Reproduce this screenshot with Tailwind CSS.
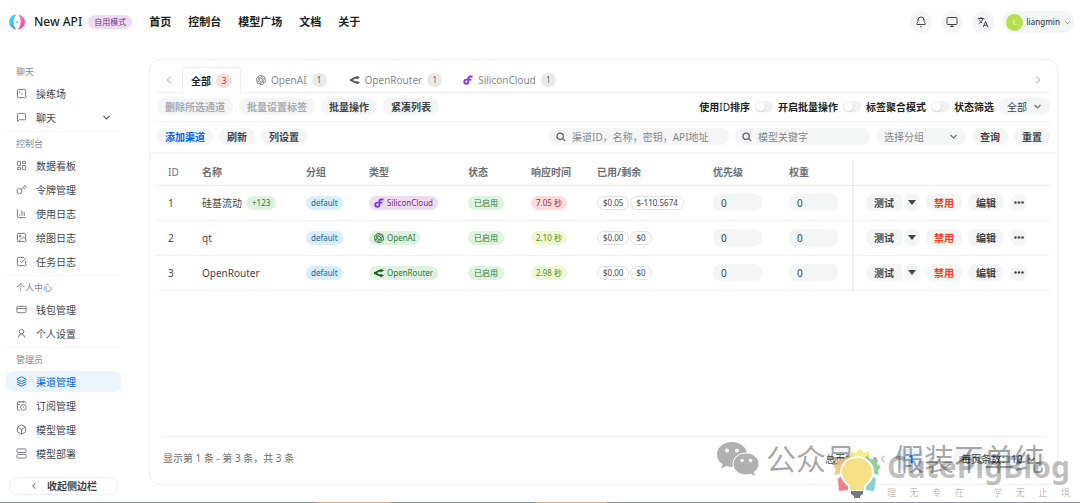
<!DOCTYPE html>
<html lang="zh-CN">
	<head>
		<meta charset="UTF-8" />
		<meta name="viewport" content="width=device-width, initial-scale=1.0" />
		<title>New API</title>
		<script src="https://cdn.jsdelivr.net/npm/@tailwindcss/browser@4"></script>
	</head>
	<body
		class="flex min-h-screen flex-col bg-white font-['Noto_Sans','Noto_Sans_CJK_SC',sans-serif] text-[10px] leading-4 text-[#41464c]"
	>
		<!-- Icon sprite -->
		<svg class="absolute size-0">
			<symbol id="i-terminal" viewBox="0 0 24 24"><rect x="3" y="3" width="18" height="18" rx="2" /><path d="m7 11 2-2-2-2M11 13h4" /></symbol>
			<symbol id="i-message" viewBox="0 0 24 24"><path d="M21 15a2 2 0 0 1-2 2H7l-4 4V5a2 2 0 0 1 2-2h14a2 2 0 0 1 2 2z" /></symbol>
			<symbol id="i-dashboard" viewBox="0 0 24 24"><rect x="3" y="3" width="7" height="9" rx="1" /><rect x="14" y="3" width="7" height="5" rx="1" /><rect x="14" y="12" width="7" height="9" rx="1" /><rect x="3" y="16" width="7" height="5" rx="1" /></symbol>
			<symbol id="i-key" viewBox="0 0 24 24"><circle cx="7.5" cy="15.5" r="5.5" /><path d="m11.4 11.6 9.6-9.6M15.5 7.5l2.3 2.3a1 1 0 0 0 1.4 0l2.1-2.1a1 1 0 0 0 0-1.4L19 4" /></symbol>
			<symbol id="i-chart" viewBox="0 0 24 24"><path d="M3 3v16a2 2 0 0 0 2 2h16M18 17V9M13 17V5M8 17v-3" /></symbol>
			<symbol id="i-image" viewBox="0 0 24 24"><rect x="3" y="3" width="18" height="18" rx="2" /><circle cx="9" cy="9" r="2" /><path d="m21 15-3.1-3.1a2 2 0 0 0-2.8 0L6 21" /></symbol>
			<symbol id="i-check" viewBox="0 0 24 24"><path d="M21 10.5V19a2 2 0 0 1-2 2H5a2 2 0 0 1-2-2V5a2 2 0 0 1 2-2h12.5" /><path d="m9 11 3 3L22 4" /></symbol>
			<symbol id="i-card" viewBox="0 0 24 24"><rect x="2" y="5" width="20" height="14" rx="2" /><path d="M2 10h20" /></symbol>
			<symbol id="i-user" viewBox="0 0 24 24"><circle cx="12" cy="8" r="5" /><path d="M19 21a7 7 0 0 0-14 0" /></symbol>
			<symbol id="i-layers" viewBox="0 0 24 24"><path d="M12.8 2.2a2 2 0 0 0-1.6 0L2.6 6.1a1 1 0 0 0 0 1.8l8.6 3.9a2 2 0 0 0 1.6 0l8.6-3.9a1 1 0 0 0 0-1.8z" /><path d="M2 12a1 1 0 0 0 .6.9l8.6 3.9a2 2 0 0 0 1.6 0l8.6-3.9A1 1 0 0 0 22 12" /><path d="M2 17a1 1 0 0 0 .6.9l8.6 3.9a2 2 0 0 0 1.6 0l8.6-3.9A1 1 0 0 0 22 17" /></symbol>
			<symbol id="i-calendar" viewBox="0 0 24 24"><path d="M16 14v2.2l1.6 1M16 2v4M21 7.5V6a2 2 0 0 0-2-2H5a2 2 0 0 0-2 2v14a2 2 0 0 0 2 2h3.5M3 10h5M8 2v4" /><circle cx="16" cy="16" r="6" /></symbol>
			<symbol id="i-package" viewBox="0 0 24 24"><path d="M21 8a2 2 0 0 0-1-1.7l-7-4a2 2 0 0 0-2 0l-7 4A2 2 0 0 0 3 8v8a2 2 0 0 0 1 1.7l7 4a2 2 0 0 0 2 0l7-4a2 2 0 0 0 1-1.7z" /><path d="m3.3 7 8.7 5 8.7-5M12 22V12" /></symbol>
			<symbol id="i-server" viewBox="0 0 24 24"><rect x="2" y="2" width="20" height="8" rx="2" /><rect x="2" y="14" width="20" height="8" rx="2" /><path d="M6 6h.01M6 18h.01" /></symbol>
			<symbol id="i-down" viewBox="0 0 24 24"><path d="m4 8 8 8 8-8" /></symbol>
			<symbol id="i-left" viewBox="0 0 24 24"><path d="m16 4-8 8 8 8" /></symbol>
			<symbol id="i-right" viewBox="0 0 24 24"><path d="m8 4 8 8-8 8" /></symbol>
			<symbol id="i-search" viewBox="0 0 24 24"><circle cx="10" cy="10" r="7.5" /><path d="m16 16 6 6" /></symbol>
			<symbol id="i-bell" viewBox="0 0 24 24"><path d="M10.3 21a2 2 0 0 0 3.4 0M3.3 15.3A1 1 0 0 0 4 17h16a1 1 0 0 0 .7-1.7C19.4 14 18 12.5 18 8A6 6 0 0 0 6 8c0 4.5-1.4 6-2.7 7.3" /></symbol>
			<symbol id="i-monitor" viewBox="0 0 24 24"><rect x="2" y="3" width="20" height="14" rx="2" /><path d="M8 21h8M12 17v4" /></symbol>
			<symbol id="i-lang" viewBox="0 0 24 24"><path d="M1.5 5h13M8 2v3M3.500 15C8 12.500 11 9 12 5M4.500 7c1 3 3.500 5.500 6.500 7M12.500 22l4.700-11 4.700 11M14 18.500h6.500" /></symbol>
			<symbol id="i-openai" viewBox="0 0 24 24"><path d="M22.2819 9.8211a5.9847 5.9847 0 0 0-.5157-4.9108 6.0462 6.0462 0 0 0-6.5098-2.9A6.0651 6.0651 0 0 0 4.9807 4.1818a5.9847 5.9847 0 0 0-3.9977 2.9 6.0462 6.0462 0 0 0 .7427 7.0966 5.98 5.98 0 0 0 .511 4.9107 6.051 6.051 0 0 0 6.5146 2.9001A5.9847 5.9847 0 0 0 13.2599 24a6.0557 6.0557 0 0 0 5.7718-4.2058 5.9894 5.9894 0 0 0 3.9977-2.9001 6.0557 6.0557 0 0 0-.7475-7.0729zm-9.022 12.6081a4.4755 4.4755 0 0 1-2.8764-1.0408l.1419-.0804 4.7783-2.7582a.7948.7948 0 0 0 .3927-.6813v-6.7369l2.02 1.1686a.071.071 0 0 1 .038.052v5.5826a4.504 4.504 0 0 1-4.4945 4.4944zm-9.6607-4.1254a4.4708 4.4708 0 0 1-.5346-3.0137l.142.0852 4.783 2.7582a.7712.7712 0 0 0 .7806 0l5.8428-3.3685v2.3324a.0804.0804 0 0 1-.0332.0615L9.74 19.9502a4.4992 4.4992 0 0 1-6.1408-1.6464zM2.3408 7.8956a4.485 4.485 0 0 1 2.3655-1.9728V11.6a.7664.7664 0 0 0 .3879.6765l5.8144 3.3543-2.0201 1.1685a.0757.0757 0 0 1-.071 0l-4.8303-2.7865A4.504 4.504 0 0 1 2.3408 7.872zm16.5963 3.8558L13.1038 8.364 15.1192 7.2a.0757.0757 0 0 1 .071 0l4.8303 2.7913a4.4944 4.4944 0 0 1-.6765 8.1042v-5.6772a.79.79 0 0 0-.407-.667zm2.0107-3.0231l-.142-.0852-4.7735-2.7818a.7759.7759 0 0 0-.7854 0L9.409 9.2297V6.8974a.0662.0662 0 0 1 .0284-.0615l4.8303-2.7866a4.4992 4.4992 0 0 1 6.6802 4.66zM8.3065 12.863l-2.02-1.1638a.0804.0804 0 0 1-.038-.0567V6.0742a4.4992 4.4992 0 0 1 7.3757-3.4537l-.142.0805L8.704 5.459a.7948.7948 0 0 0-.3927.6813zm1.0976-2.3654l2.602-1.4998 2.6069 1.4998v2.9994l-2.5974 1.4997-2.6067-1.4997Z" fill="currentColor" stroke="currentColor" stroke-width=".5" /></symbol>
			<symbol id="i-openrouter" viewBox="0 0 24 24"><path d="M0 12c7 0 7-6 17-6M0 12c7 0 7 6 17 6" fill="none" stroke="currentColor" stroke-width="4.500" /><path d="m16 1.500 8 4.500-8 4.500zM16 13.500l8 4.500-8 4.500z" fill="currentColor" /></symbol>
			<symbol id="i-silicon" viewBox="0 0 24 24"><path d="M23 3.500h-6a4 4 0 0 0-4 4V16a5 5 0 1 1-5-5h12" fill="none" stroke="currentColor" stroke-width="4.500" /></symbol>
			<linearGradient id="logo-left" x1="0" y1="0" x2="1" y2="1"><stop offset=".3" stop-color="#35d0f8" /><stop offset="1" stop-color="#8a6cf2" /></linearGradient>
			<linearGradient id="logo-right" x1="0" y1="0" x2="1" y2="1"><stop offset="0" stop-color="#f9a0d4" /><stop offset=".7" stop-color="#f4509f" /></linearGradient>
		</svg>

		<!-- Header -->
		<header class="flex items-center justify-between py-[11px] pr-[6px] pl-[9px]">
			<div class="flex items-center">
				<svg class="size-4" viewBox="0 0 32 32">
					<path d="M15 1A15 15 0 0 0 15 31C7 25 7 7 15 1z" fill="url(#logo-left)" />
					<path d="M17 31A15 15 0 0 0 17 1c8 6 8 24 0 30z" fill="url(#logo-right)" />
					<path d="m16 12 1 3 3 1-3 1-1 3-1-3-3-1 3-1z" fill="#35c8f5" />
				</svg>
				<span class="ml-[9px] text-[12px] font-medium text-[#1c1f23]">New API</span>
				<span class="ml-[6px] rounded-full bg-[#efdcf3] px-[6px] text-[8px] leading-[14px] text-[#7a2d8a]">自用模式</span>
				<nav class="ml-[17px] flex gap-[17px] text-[11px] font-bold text-[#1c1f23]">
					<a href="#">首页</a>
					<a href="#">控制台</a>
					<a href="#">模型广场</a>
					<a href="#">文档</a>
					<a href="#">关于</a>
				</nav>
			</div>
			<div class="flex items-center gap-[9px]">
				<button aria-label="通知" class="flex size-[22px] items-center justify-center rounded-full bg-[#f4f5f5]">
					<svg class="size-3 fill-none stroke-current stroke-2"><use href="#i-bell" /></svg>
				</button>
				<button aria-label="主题" class="flex size-[22px] items-center justify-center rounded-full bg-[#f4f5f5]">
					<svg class="size-3 fill-none stroke-current stroke-2"><use href="#i-monitor" /></svg>
				</button>
				<button aria-label="语言" class="flex size-[22px] items-center justify-center rounded-full bg-[#f4f5f5]">
					<svg class="size-3 fill-none stroke-current stroke-2"><use href="#i-lang" /></svg>
				</button>
				<button class="flex h-[22px] items-center rounded-full bg-[#f4f5f5] pr-[3px] pl-[3px]">
					<span class="size-[17px] rounded-full bg-[#b3e04f] text-center text-[7px] leading-[17px] text-white">L</span>
					<span class="mr-1 ml-[3px] text-[8px] font-medium">liangmin</span>
					<svg class="size-[7px] fill-none stroke-current stroke-2"><use href="#i-down" /></svg>
				</button>
			</div>
		</header>

		<div class="flex flex-1 pt-[15px]">
			<!-- Sidebar -->
			<aside class="w-[149px] shrink-0 pr-7 pl-[6px]">
				<nav id="sidebar"></nav>
				<button
					class="mt-[13px] ml-[3px] flex h-[18px] w-[109px] items-center justify-center gap-[9px] rounded-[8px] border border-[#f0f0f1] font-semibold"
				>
					<svg class="size-2 fill-none stroke-current stroke-3"><use href="#i-left" /></svg>
					收起侧边栏
				</button>
			</aside>

			<!-- Channel card -->
			<main class="mr-[22px] mb-[17px] flex min-w-0 flex-1 flex-col rounded-[11px] border border-[#f0f1f1]">
				<div class="mx-[7px] mt-[7px] flex h-[26px] items-center border-b border-[#eeefef] text-[#85888c]">
					<button aria-label="向左" class="flex w-[25px] justify-center pr-[2px]">
						<svg class="size-[10px] fill-none stroke-current stroke-2"><use href="#i-left" /></svg>
					</button>
					<button class="-mb-px flex h-[26px] items-center gap-[5px] border border-b-0 border-[#eeefef] bg-white px-2 font-bold text-[#1c1f23]">
						全部<span class="w-4 rounded-full bg-[#fddcdb] text-center text-[8px] leading-[14px] font-normal text-[#a0352f]">3</span>
					</button>
					<button class="ml-[15px] flex items-center gap-[5px]">
						<svg class="size-[10px]"><use href="#i-openai" /></svg>
						OpenAI<span class="w-[15px] rounded-full bg-[#e8eaea] text-center text-[8px] leading-[14px] text-[#5b5f64]">1</span>
					</button>
					<button class="ml-[23px] flex items-center gap-[5px]">
						<svg class="size-[10px] text-[#53575c]"><use href="#i-openrouter" /></svg>
						OpenRouter<span class="w-[15px] rounded-full bg-[#e8eaea] text-center text-[8px] leading-[14px] text-[#5b5f64]">1</span>
					</button>
					<button class="ml-[21px] flex items-center gap-[5px]">
						<svg class="size-[10px] text-[#7c3aed]"><use href="#i-silicon" /></svg>
						SiliconCloud<span class="w-[15px] rounded-full bg-[#e8eaea] text-center text-[8px] leading-[14px] text-[#5b5f64]">1</span>
					</button>
					<button aria-label="向右" class="mr-[7px] ml-auto">
						<svg class="size-[10px] fill-none stroke-current stroke-2"><use href="#i-right" /></svg>
					</button>
				</div>

				<div class="mx-[7px] flex items-center justify-between border-b border-[#f0f1f1] pt-[5px] pb-[6px]">
					<div class="flex gap-[6px] font-bold">
						<button class="h-[17px] rounded-[8px] bg-[#f4f5f5] px-2 text-[#a7abb0]">删除所选通道</button>
						<button class="h-[17px] rounded-[8px] bg-[#f4f5f5] px-2 text-[#a7abb0]">批量设置标签</button>
						<button class="h-[17px] rounded-[8px] bg-[#f4f5f5] px-2">批量操作</button>
						<button class="h-[17px] rounded-[8px] bg-[#f4f5f5] px-2">紧凑列表</button>
					</div>
					<div class="flex items-center gap-[5px] font-bold text-[#1c1f23]">
						<label for="sort-id">使用<span class="font-normal">ID</span>排序</label>
						<input id="sort-id" type="checkbox" class="flex h-[11px] w-[18px] appearance-none items-center rounded-full bg-[#f0f2f2] pl-px before:size-[9px] before:rounded-full before:bg-white before:shadow-sm" />
						<label for="batch">开启批量操作</label>
						<input id="batch" type="checkbox" class="flex h-[11px] w-[18px] appearance-none items-center rounded-full bg-[#f0f2f2] pl-px before:size-[9px] before:rounded-full before:bg-white before:shadow-sm" />
						<label for="tag-mode">标签聚合模式</label>
						<input id="tag-mode" type="checkbox" class="flex h-[11px] w-[18px] appearance-none items-center rounded-full bg-[#f0f2f2] pl-px before:size-[9px] before:rounded-full before:bg-white before:shadow-sm" />
						<label for="status">状态筛选</label>
						<div class="relative">
							<select id="status" class="block h-[17px] w-[51px] appearance-none rounded-[8px] bg-[#f4f5f5] px-2 font-normal text-[#41464c]">
								<option>全部</option>
							</select>
							<svg class="pointer-events-none absolute top-1 right-2 size-[9px] fill-none stroke-[#6b7075] stroke-3"><use href="#i-down" /></svg>
						</div>
					</div>
				</div>

				<div class="flex items-center justify-between border-b border-[#f0f1f1] px-[7px] pt-[6px] pb-[7px]">
					<div class="flex gap-[6px] font-bold">
						<button class="h-[17px] rounded-[8px] bg-[#f4f5f5] px-2 text-[#0064fa]">添加渠道</button>
						<button class="h-[17px] rounded-[8px] bg-[#f4f5f5] px-2">刷新</button>
						<button class="h-[17px] rounded-[8px] bg-[#f4f5f5] px-2">列设置</button>
					</div>
					<form class="flex items-center gap-[6px]">
						<label class="flex h-[17px] w-[180px] items-center gap-[6px] rounded-[8px] bg-[#f4f5f5] px-[7px]">
							<svg class="size-[10px] shrink-0 fill-none stroke-[#5b5f64] stroke-3"><use href="#i-search" /></svg>
							<input type="text" aria-label="渠道搜索" placeholder="渠道ID，名称，密钥，API地址" class="w-full placeholder:text-[#85888c]" />
						</label>
						<label class="flex h-[17px] w-[135px] items-center gap-[6px] rounded-[8px] bg-[#f4f5f5] px-[7px]">
							<svg class="size-[10px] shrink-0 fill-none stroke-[#5b5f64] stroke-3"><use href="#i-search" /></svg>
							<input type="text" aria-label="模型搜索" placeholder="模型关键字" class="w-full placeholder:text-[#85888c]" />
						</label>
						<div class="relative">
							<select aria-label="选择分组" class="block h-[17px] w-[90px] appearance-none rounded-[8px] bg-[#f4f5f5] px-2 text-[#85888c]">
								<option>选择分组</option>
							</select>
							<svg class="pointer-events-none absolute top-1 right-2 size-[9px] fill-none stroke-[#6b7075] stroke-3"><use href="#i-down" /></svg>
						</div>
						<button type="button" class="h-[17px] rounded-[8px] bg-[#f4f5f5] px-2 font-bold">查询</button>
						<button type="button" class="h-[17px] rounded-[8px] bg-[#f4f5f5] px-2 font-bold">重置</button>
					</form>
				</div>

				<div class="px-[7px] pt-[7px]">
					<table class="w-full table-fixed border-collapse text-left">
						<thead class="text-[#6b7075]">
							<tr class="h-[25px] border-b border-[#eaebeb]">
								<th class="w-[34px] pl-[11px] font-normal">ID</th>
								<th class="w-[104px] pl-[11px] font-bold">名称</th>
								<th class="w-[63px] pl-[11px] font-bold">分组</th>
								<th class="w-[99px] pl-[11px] font-bold">类型</th>
								<th class="w-[63px] pl-[11px] font-bold">状态</th>
								<th class="w-[66px] pl-[11px] font-bold">响应时间</th>
								<th class="w-[116px] pl-[11px] font-bold">已用/剩余</th>
								<th class="w-[76px] pl-[11px] font-bold">优先级</th>
								<th class="w-[75px] pl-[11px] font-bold">权重</th>
								<th class="border-l-2 border-[#f0f1f1]" aria-label="操作"></th>
							</tr>
						</thead>
						<tbody id="channels"></tbody>
					</table>
				</div>

				<!-- Table footer -->
				<div class="mx-[13px] mt-auto flex h-[48px] items-start justify-between border-t border-[#eeefef] pt-[11px]">
					<p class="leading-5 text-[#6b7075]">显示第 1 条 - 第 3 条，共 3 条</p>
					<div class="flex h-[22px] items-center">
						<span>总页数：1</span>
						<button aria-label="上一页" class="ml-[7px]"><svg class="size-[10px] fill-none stroke-[#85888c] stroke-2"><use href="#i-left" /></svg></button>
						<button class="ml-[11px] h-[21px] w-6 rounded-[3px] bg-[#e6f0ff] font-bold text-[#0064fa]">1</button>
						<button aria-label="下一页" class="ml-[11px]"><svg class="size-[10px] fill-none stroke-[#85888c] stroke-2"><use href="#i-right" /></svg></button>
						<div class="relative ml-[9px]">
							<select aria-label="每页条数" class="block h-[21px] w-[91px] appearance-none rounded-[8px] bg-[#f4f5f5] px-2">
								<option>每页条数：10</option>
							</select>
							<svg class="pointer-events-none absolute top-[6px] right-2 size-[9px] fill-none stroke-[#6b7075] stroke-3"><use href="#i-down" /></svg>
						</div>
					</div>
				</div>
			</main>
		</div>

		<!-- Taskbar edge -->
		<div class="flex h-px bg-[#8f9294]">
			<span class="ml-[318px] w-[72px] bg-[#e0a98a]"></span>
			<span class="ml-[145px] w-[72px] bg-[#e0a98a]"></span>
		</div>

		<!-- Account watermark -->
		<div class="pointer-events-none absolute right-[36px] bottom-[22px] flex h-[44px] items-center text-[30px] text-black/35">
			<svg class="mr-[7px] h-[34px] w-[42px]" viewBox="0 0 42 34">
				<path d="M15 0C6.500 0 0 5.500 0 12.500c0 4 2 7.300 5.500 9.600L4 27l5.500-3c2 .6 4 1 6.300.9C14 16 21 10.500 30 10.500 28.500 4.500 22.500 0 15 0z" fill="#b0b0b0" />
				<path d="M41.500 22c0-6-5.500-10.500-12.500-10.500S16.500 16 16.500 22 22 32.500 29 32.500c1.600 0 3.100-.2 4.500-.7L38 34l-1.200-3.900C39.700 28.200 41.500 25.300 41.500 22z" fill="#b0b0b0" />
				<g fill="#fff"><circle cx="10" cy="8.500" r="2" /><circle cx="20" cy="8.500" r="2" /><circle cx="25" cy="18.500" r="1.800" /><circle cx="33.500" cy="18.500" r="1.800" /></g>
			</svg>
			<span>公众号</span>
			<span class="w-[38px] text-center">·</span>
			<span>假装不单纯</span>
		</div>

		<!-- Blog watermark -->
		<div class="pointer-events-none absolute right-[10px] bottom-1 flex items-end gap-[6px]">
			<svg class="h-[51px] w-[48px]" viewBox="0 0 48 51">
				<g opacity=".85">
					<path d="m16 9 2-6 5 2 4-5 4 5 5-2 0 7-12 5z" fill="#f3ea72" />
					<path d="m3 12 8-1 5-3 2 8-8 9-9 2 2-6-3-3 4-2z" fill="#f6bc6c" />
					<path d="m45 12-8-1-4-3-4 8 10 9 7 2-1-5 3-3-4-3z" fill="#7ccb83" />
					<path d="m10 26-5 5 1 12 10-1 4-6z" fill="#ee6a76" />
					<path d="m37 26 6 5-2 12-9-1-4-6z" fill="#72cbc6" />
				</g>
				<path d="M24 9C15 9 8 16 8 24c0 7 4 10 8 14v5h16v-5c4-4 8-7 8-14 0-8-7-15-16-15z" fill="#f7df86" stroke="#fff" stroke-width="2" />
				<path d="M18 43h12v3l-3 2v2h-6v-2l-3-2z" fill="#777" />
			</svg>
			<div class="w-[183px]">
				<p class="mb-[3px] text-[30px] leading-[34px] font-bold text-black/25">CutePigBlog</p>
				<p class="flex justify-between text-[9px] leading-3 text-black/30">
					<span>理</span><span>无</span><span>专</span><span>在</span>
					<span class="ml-4">学</span><span>无</span><span>止</span><span>境</span>
				</p>
			</div>
		</div>

		<script>
			const sections = [
				{ title: "聊天", items: [["terminal", "操练场"], ["message", "聊天"]] },
				{
					title: "控制台",
					items: [
						["dashboard", "数据看板"],
						["key", "令牌管理"],
						["chart", "使用日志"],
						["image", "绘图日志"],
						["check", "任务日志"],
					],
				},
				{ title: "个人中心", items: [["card", "钱包管理"], ["user", "个人设置"]] },
				{
					title: "管理员",
					items: [
						["layers", "渠道管理"],
						["calendar", "订阅管理"],
						["package", "模型管理"],
						["server", "模型部署"],
					],
				},
			];
			const active = "渠道管理";

			document.getElementById("sidebar").innerHTML = sections
				.map(
					(section) => `
					<section class="border-t border-[#f7f7f8] first:border-transparent">
						<h2 class="pl-[10px] text-[9px] leading-[23px] text-[#85888c]">${section.title}</h2>
						${section.items
							.map(
								([icon, label]) => `
								<a href="#" class="mb-[3px] flex h-[21px] items-center gap-[9px] rounded-[7px] pl-[10px] ${
									label === active ? "bg-[#eaf5ff] text-[#0064fa]" : ""
								}">
									<svg class="size-[11px] fill-none stroke-2 ${
										label === active ? "stroke-[#0064fa]" : "stroke-[#6b7075]"
									}"><use href="#i-${icon}" /></svg>
									${label}
									${
										label === "聊天"
											? '<svg class="mr-[10px] ml-auto size-[9px] fill-none stroke-[#5b5f64] stroke-3"><use href="#i-down" /></svg>'
											: ""
									}
								</a>`
							)
							.join("")}
					</section>`
				)
				.join("");

			const purple = "bg-[#efdcf3] text-[#7a2d8a]";
			const green = "bg-[#def3df] text-[#35783b]";
			const red = "bg-[#fddcdb] text-[#a0352f]";
			const lime = "bg-[#eff8d4] text-[#5f8a10]";

			const channels = [
				{ id: 1, name: "硅基流动", keys: "+123", type: "SiliconCloud", icon: "silicon", iconColor: "text-[#7c3aed]", typeColor: purple, time: "7.05 秒", timeColor: red, used: "$0.05", left: "$-110.5674" },
				{ id: 2, name: "qt", type: "OpenAI", icon: "openai", iconColor: "text-[#35783b]", typeColor: green, time: "2.10 秒", timeColor: lime, used: "$0.00", left: "$0" },
				{ id: 3, name: "OpenRouter", type: "OpenRouter", icon: "openrouter", iconColor: "text-[#1b5e20]", typeColor: green, time: "2.98 秒", timeColor: lime, used: "$0.00", left: "$0" },
			];

			document.getElementById("channels").innerHTML = channels
				.map(
					(c) => `
					<tr class="h-[35px] border-b border-[#f0f1f1]">
						<td class="pl-[11px]">${c.id}</td>
						<td class="pl-[11px]">
							<div class="flex items-center gap-1">${c.name}${
								c.keys ? `<span class="rounded-full px-[6px] text-[8px] leading-[14px] ${green}">${c.keys}</span>` : ""
							}</div>
						</td>
						<td class="pl-[11px]"><div class="flex"><span class="rounded-full bg-[#d8effb] px-[5px] text-[8px] leading-[14px] text-[#1f6399]">default</span></div></td>
						<td class="pl-[11px]">
							<div class="flex">
								<span class="flex items-center gap-[3px] rounded-full px-[5px] text-[8px] leading-[14px] ${c.typeColor}"><svg class="size-[10px] ${c.iconColor}"><use href="#i-${c.icon}" /></svg>${c.type}</span>
							</div>
						</td>
						<td class="pl-[11px]"><div class="flex"><span class="rounded-full px-[6px] text-[8px] leading-[14px] ${green}">已启用</span></div></td>
						<td class="pl-[11px]"><div class="flex"><span class="rounded-full px-[5px] text-[8px] leading-[14px] ${c.timeColor}">${c.time}</span></div></td>
						<td class="pl-[11px]">
							<div class="flex gap-px text-[8px] leading-3">
								<span class="rounded-full border border-[#dfe0e1] px-[5px]">${c.used}</span>
								<span class="rounded-full border border-[#dfe0e1] px-[5px]">${c.left}</span>
							</div>
						</td>
						<td class="pl-[11px]"><input type="text" value="0" aria-label="优先级" class="block h-[17px] w-[49px] rounded-[7px] bg-[#f4f5f5] px-2" /></td>
						<td class="pl-[11px]"><input type="text" value="0" aria-label="权重" class="block h-[17px] w-[49px] rounded-[7px] bg-[#f4f5f5] px-2" /></td>
						<td class="border-l-2 border-[#f0f1f1] pl-3">
							<div class="flex items-center gap-[6px] font-bold">
								<div class="flex gap-[2px]">
									<button class="h-[17px] rounded-l-[8px] rounded-r-[4px] bg-[#f4f5f5] px-2">测试</button>
									<button aria-label="更多测试" class="flex h-[17px] w-4 items-center justify-center rounded-[7px] bg-[#f4f5f5]">
										<svg class="h-[5px] w-2 fill-current" viewBox="0 0 8 5"><path d="M0 0h8L4 5z" /></svg>
									</button>
								</div>
								<button class="h-[17px] rounded-[8px] bg-[#f4f5f5] px-2 text-[#f93920]">禁用</button>
								<button class="h-[17px] rounded-[8px] bg-[#f4f5f5] px-2">编辑</button>
								<button aria-label="更多" class="flex size-[17px] items-center justify-center rounded-[8px] bg-[#f4f5f5]">
									<svg class="h-[3px] w-[10px] fill-current" viewBox="0 0 20 6"><circle cx="3" cy="3" r="2.600" /><circle cx="10" cy="3" r="2.600" /><circle cx="17" cy="3" r="2.600" /></svg>
								</button>
							</div>
						</td>
					</tr>`
				)
				.join("");
		</script>
	</body>
</html>
